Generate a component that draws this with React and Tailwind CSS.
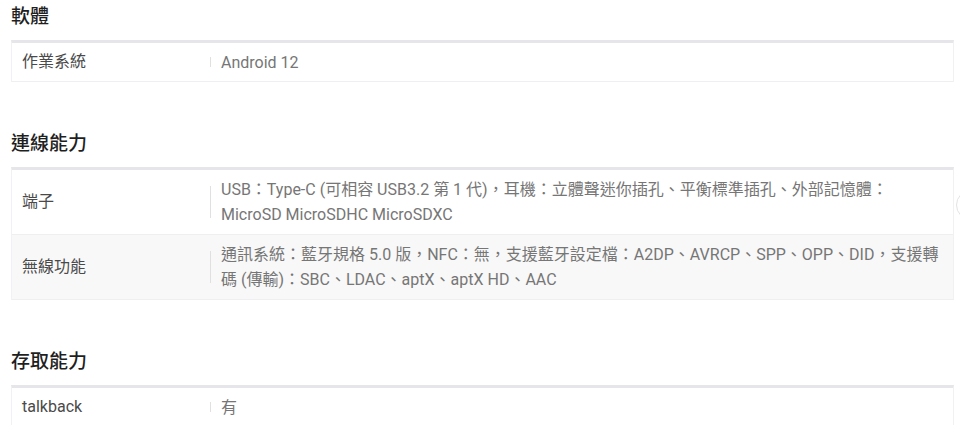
import React from 'react';

const SECTIONS = [
    {
        title: '軟體',
        rows: [
            { label: '作業系統', lines: ['Android 12'] }
        ]
    },
    {
        title: '連線能力',
        rows: [
            {
                label: '端子',
                lines: [
                    'USB：Type-C (可相容 USB3.2 第 1 代)，耳機：立體聲迷你插孔、平衡標準插孔、外部記憶體：',
                    'MicroSD MicroSDHC MicroSDXC'
                ]
            },
            {
                label: '無線功能',
                lines: [
                    '通訊系統：藍牙規格 5.0 版，NFC：無，支援藍牙設定檔：A2DP、AVRCP、SPP、OPP、DID，支援轉',
                    '碼 (傳輸)：SBC、LDAC、aptX、aptX HD、AAC'
                ]
            }
        ]
    },
    {
        title: '存取能力',
        rows: [
            { label: 'talkback', lines: ['有'] }
        ]
    }
];

const SpecRow = ({ row, shaded }) => {
    const multi = row.lines.length > 1;
    return (
        <div className={`flex items-center border-b border-[#efeff1] ${shaded ? 'bg-[#f8f8f8]' : 'bg-white'} ${multi ? 'py-[7px]' : 'h-[39px]'}`}>
            <div className="w-[198px] shrink-0 pl-[10px] text-[16px] text-[#4a4a4a]">{row.label}</div>
            <div className={`w-px shrink-0 bg-[#e0e0e0] ${multi ? 'h-[32px]' : 'h-[10px]'}`} />
            <div className="pl-[10px] text-[16px] leading-[25px] text-[#767676]">
                {row.lines.map((line, i) => (
                    <div key={i} className="whitespace-nowrap">{line}</div>
                ))}
            </div>
        </div>
    );
};

export default function App() {
    return (
        <div
            lang="zh-Hant"
            className="relative w-[960px] h-[425px] overflow-hidden bg-white px-[11px] pt-[4px]"
            style={{ fontFamily: "Roboto, 'Noto Sans CJK TC', sans-serif" }}
        >
            {SECTIONS.map((section, si) => (
                <div key={section.title} className={si < SECTIONS.length - 1 ? 'mb-[49px]' : ''}>
                    <h2 className="text-[19px] leading-[26px] font-medium text-[#1f1f1f] mb-[10px]">{section.title}</h2>
                    <div className="w-[943px] border-t-[3px] border-t-[#e6e6ea] border-x border-x-[#f1f1f3]">
                        {section.rows.map((row, ri) => (
                            <SpecRow key={row.label} row={row} shaded={ri % 2 === 1} />
                        ))}
                    </div>
                </div>
            ))}

            {/* partly hidden floating button at right edge */}
            <div className="absolute left-[956px] top-[190px] w-[30px] h-[30px] rounded-full border border-[#e3e3e3] bg-white" />
        </div>
    );
}
